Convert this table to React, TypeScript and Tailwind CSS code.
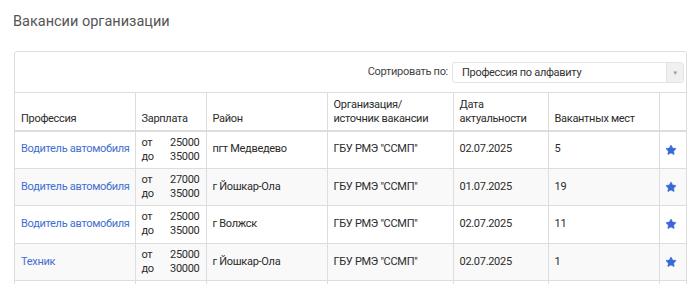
import { Star } from "lucide-react";

const rows = [
  { prof: "Водитель автомобиля", from: "25000", to: "35000", area: "пгт Медведево", org: 'ГБУ РМЭ "ССМП"', date: "02.07.2025", count: "5" },
  { prof: "Водитель автомобиля", from: "27000", to: "35000", area: "г Йошкар-Ола", org: 'ГБУ РМЭ "ССМП"', date: "01.07.2025", count: "19" },
  { prof: "Водитель автомобиля", from: "25000", to: "35000", area: "г Волжск", org: 'ГБУ РМЭ "ССМП"', date: "02.07.2025", count: "11" },
  { prof: "Техник", from: "25000", to: "30000", area: "г Йошкар-Ола", org: 'ГБУ РМЭ "ССМП"', date: "02.07.2025", count: "1" },
];

export default function App() {
  return (
    <div className="min-h-screen bg-white font-['Roboto',sans-serif] text-[11px] tracking-[-0.3px] text-[#2b2b2b]">
      <h1 className="pl-[13px] pt-[12px] text-[14.5px] leading-[20px] tracking-normal text-[#555]">Вакансии организации</h1>

      <div className="ml-[14px] mt-[19px] w-[673px] rounded-t-[3px] border border-[#ddd]">
        <div className="flex h-[40px] items-center justify-end gap-[4px] pr-[2px]">
          <span className="text-[#444]">Сортировать по:</span>
          <div className="flex h-[21px] w-[232px] items-stretch rounded-[3px] border border-[#e3e3e3] bg-white">
            <span className="flex-1 pl-[9px] leading-[19px] text-[#333]">Профессия по алфавиту</span>
            <span className="flex w-[17px] items-center justify-center rounded-r-[3px] border-l border-[#e3e3e3] bg-[#f0f0f0] text-[6px] text-[#999]">▼</span>
          </div>
        </div>

        <table className="w-full table-fixed border-collapse">
          <colgroup>
            <col className="w-[120px]" />
            <col className="w-[71px]" />
            <col className="w-[121px]" />
            <col className="w-[126px]" />
            <col className="w-[95px]" />
            <col className="w-[111px]" />
            <col />
          </colgroup>
          <thead>
            <tr className="h-[38px]">
              {["Профессия", "Зарплата", "Район", "Организация/\nисточник вакансии", "Дата\nактуальности", "Вакантных мест", ""].map((h, i) => (
                <th
                  key={i}
                  className={`whitespace-pre-line border-t border-b-2 border-[#ddd] px-[6px] pb-[4px] text-left align-bottom font-normal leading-[14px] ${i > 0 ? "border-l" : ""}`}
                >
                  {h}
                </th>
              ))}
            </tr>
          </thead>
          <tbody>
            {rows.map((r, i) => (
              <tr key={i} className={`h-[37.5px] ${i % 2 === 1 ? "bg-[#f9f9f9]" : "bg-white"}`}>
                <td className="whitespace-nowrap border-b border-[#ddd] px-[6px] align-middle">
                  <a href="#" className="text-[#3f6fd0]">{r.prof}</a>
                </td>
                <td className="border-b border-l border-[#ddd] px-[6px] align-middle leading-[14px]">
                  <div className="flex justify-between"><span>от</span><span>{r.from}</span></div>
                  <div className="flex justify-between"><span>до</span><span>{r.to}</span></div>
                </td>
                <td className="border-b border-l border-[#ddd] px-[6px] align-middle">{r.area}</td>
                <td className="border-b border-l border-[#ddd] px-[6px] align-middle">{r.org}</td>
                <td className="border-b border-l border-[#ddd] px-[6px] align-middle">{r.date}</td>
                <td className="border-b border-l border-[#ddd] px-[6px] align-middle">{r.count}</td>
                <td className="border-b border-l border-[#ddd] pl-[5px] align-middle">
                  <Star className="h-[12px] w-[12px] fill-[#3a68d8] text-[#3a68d8]" strokeWidth={1} />
                </td>
              </tr>
            ))}
            <tr className="h-[37.5px]">
              <td />
              <td className="border-l border-[#ddd]" />
              <td className="border-l border-[#ddd]" />
              <td className="border-l border-[#ddd]" />
              <td className="border-l border-[#ddd]" />
              <td className="border-l border-[#ddd]" />
              <td className="border-l border-[#ddd]" />
            </tr>
          </tbody>
        </table>
      </div>
    </div>
  );
}
